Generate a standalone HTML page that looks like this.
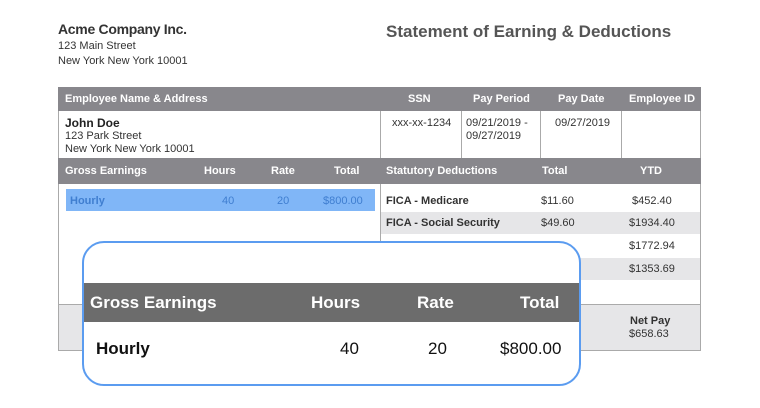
<!DOCTYPE html>
<html><head><style>
*{margin:0;padding:0;box-sizing:border-box}
body{width:760px;height:408px;background:#fff;font-family:"Liberation Sans",Arial,sans-serif;position:relative;overflow:hidden;color:#333}
.a{position:absolute;white-space:nowrap}
.hd{color:#fff;font-weight:bold;font-size:11px}
.t{font-size:11px;color:#333}
.b{font-weight:bold}
</style></head><body>
<div class="a b" style="left:58px;top:21px;font-size:14px;color:#333;letter-spacing:-0.3px">Acme Company Inc.</div>
<div class="a t" style="left:58px;top:40px">123 Main Street</div>
<div class="a t" style="left:58px;top:55px">New York New York 10001</div>
<div class="a b" style="left:386px;top:22px;font-size:17px;color:#555">Statement of Earning &amp; Deductions</div>

<!-- table -->
<div class="a" style="left:58px;top:87px;width:643px;height:264px;border:1px solid #aaa;border-top:none"></div>
<div class="a" style="left:58px;top:87px;width:643px;height:24px;background:#88878c"></div>
<div class="a hd" style="left:65px;top:93px">Employee Name &amp; Address</div>
<div class="a hd" style="left:408px;top:93px">SSN</div>
<div class="a hd" style="left:473px;top:93px">Pay Period</div>
<div class="a hd" style="left:558px;top:93px">Pay Date</div>
<div class="a hd" style="left:629px;top:93px">Employee ID</div>
<div class="a" style="left:380px;top:111px;width:1px;height:47px;background:#aaa"></div>
<div class="a" style="left:461px;top:111px;width:1px;height:47px;background:#aaa"></div>
<div class="a" style="left:540px;top:111px;width:1px;height:47px;background:#aaa"></div>
<div class="a" style="left:621px;top:111px;width:1px;height:47px;background:#aaa"></div>
<div class="a b" style="left:65px;top:116px;font-size:12px;color:#222">John Doe</div>
<div class="a t" style="left:65px;top:130px">123 Park Street</div>
<div class="a t" style="left:65px;top:143px">New York New York 10001</div>
<div class="a t" style="left:392px;top:117px">xxx-xx-1234</div>
<div class="a t" style="left:466px;top:117px">09/21/2019 -</div>
<div class="a t" style="left:466px;top:130px">09/27/2019</div>
<div class="a t" style="left:555px;top:117px">09/27/2019</div>

<div class="a" style="left:58px;top:158px;width:643px;height:26px;background:#88878c"></div>
<div class="a hd" style="left:65px;top:165px">Gross Earnings</div>
<div class="a hd" style="left:204px;top:165px">Hours</div>
<div class="a hd" style="left:271px;top:165px">Rate</div>
<div class="a hd" style="left:334px;top:165px">Total</div>
<div class="a hd" style="left:386px;top:165px">Statutory Deductions</div>
<div class="a hd" style="left:542px;top:165px">Total</div>
<div class="a hd" style="left:640px;top:165px">YTD</div>

<div class="a" style="left:380px;top:184px;width:1px;height:120px;background:#aaa"></div>
<div class="a" style="left:66px;top:189px;width:309px;height:22px;background:#80b6f7"></div>
<div class="a b" style="left:70px;top:195px;font-size:11px;color:#3f7ed0">Hourly</div>
<div class="a" style="left:222px;top:195px;font-size:11px;color:#3f7ed0">40</div>
<div class="a" style="left:277px;top:195px;font-size:11px;color:#3f7ed0">20</div>
<div class="a" style="left:323px;top:195px;font-size:11px;color:#3f7ed0">$800.00</div>

<div class="a" style="left:381px;top:212px;width:319px;height:22px;background:#e6e6e8"></div>
<div class="a" style="left:381px;top:258px;width:319px;height:22px;background:#e6e6e8"></div>
<div class="a b t" style="left:386px;top:195px">FICA - Medicare</div>
<div class="a t" style="left:541px;top:195px">$11.60</div>
<div class="a t" style="left:632px;top:195px">$452.40</div>
<div class="a b t" style="left:386px;top:217px">FICA - Social Security</div>
<div class="a t" style="left:541px;top:217px">$49.60</div>
<div class="a t" style="left:629px;top:217px">$1934.40</div>
<div class="a t" style="left:629px;top:240px">$1772.94</div>
<div class="a t" style="left:629px;top:263px">$1353.69</div>

<div class="a" style="left:59px;top:304px;width:641px;height:46px;background:#e6e6e8;border-top:1px solid #aaa"></div>
<div class="a b t" style="left:630px;top:315px">Net Pay</div>
<div class="a t" style="left:629px;top:328px">$658.63</div>

<!-- overlay -->
<div class="a" style="left:82px;top:241px;width:499px;height:145px;border:2px solid #5b9cf0;border-radius:22px;background:#fff;overflow:hidden">
  <div class="a" style="left:0;top:40px;width:500px;height:39px;background:#6c6c6c"></div>
  <div class="a b" style="left:6px;top:50px;font-size:17px;color:#fff">Gross Earnings</div>
  <div class="a b" style="left:227px;top:50px;font-size:17px;color:#fff">Hours</div>
  <div class="a b" style="left:333px;top:50px;font-size:17px;color:#fff">Rate</div>
  <div class="a b" style="left:436px;top:50px;font-size:17px;color:#fff">Total</div>
  <div class="a b" style="left:12px;top:96px;font-size:17px;color:#111">Hourly</div>
  <div class="a" style="left:256px;top:96px;font-size:17px;color:#111">40</div>
  <div class="a" style="left:344px;top:96px;font-size:17px;color:#111">20</div>
  <div class="a" style="left:416px;top:96px;font-size:17px;color:#111">$800.00</div>
</div>
</body></html>
